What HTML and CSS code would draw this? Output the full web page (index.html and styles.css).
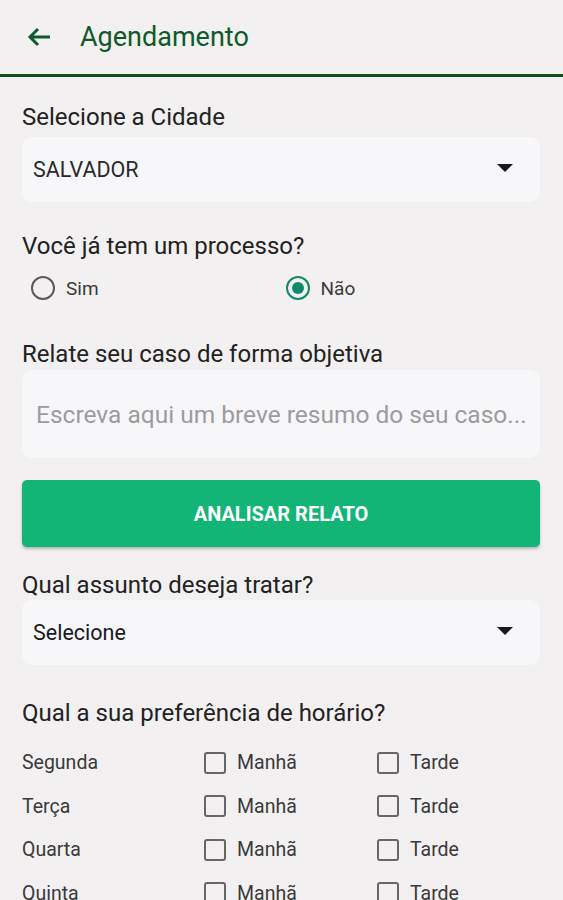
FILE: index.html
```html
<!DOCTYPE html>
<html>
    <head>
        <title>Agendamento</title>
        <meta name="viewport" content="width=device-width, initial-scale=1.0">
        <link rel="stylesheet" href="styles.css">
    </head>
    <body>

        <div class="topbar">
            <svg class="back" width="26" height="20" viewBox="0 0 26 20">
                <path d="M24 10H4M12 2L4 10l8 8" fill="none" stroke="#0f5a2a" stroke-width="3"/>
            </svg>
            <span class="title">Agendamento</span>
        </div>

        <form class="content">
            <label class="question">Selecione a Cidade</label>
            <div class="select">
                <span class="upper">SALVADOR</span>
                <span class="caret"></span>
            </div>

            <label class="question q-radio">Você já tem um processo?</label>
            <div class="radios">
                <div class="option"><span class="radio"></span>Sim</div>
                <div class="option"><span class="radio checked"></span>Não</div>
            </div>

            <label class="question q-case">Relate seu caso de forma objetiva</label>
            <div class="textbox">Escreva aqui um breve resumo do seu caso...</div>

            <div class="btn">ANALISAR RELATO</div>

            <label class="question q-subject">Qual assunto deseja tratar?</label>
            <div class="select">
                <span>Selecione</span>
                <span class="caret"></span>
            </div>

            <label class="question q-time">Qual a sua preferência de horário?</label>
            <div class="days">
                <div class="day">Segunda</div>
                <div class="check"><span class="box"></span>Manhã</div>
                <div class="check"><span class="box"></span>Tarde</div>

                <div class="day">Terça</div>
                <div class="check"><span class="box"></span>Manhã</div>
                <div class="check"><span class="box"></span>Tarde</div>

                <div class="day">Quarta</div>
                <div class="check"><span class="box"></span>Manhã</div>
                <div class="check"><span class="box"></span>Tarde</div>

                <div class="day">Quinta</div>
                <div class="check"><span class="box"></span>Manhã</div>
                <div class="check"><span class="box"></span>Tarde</div>
            </div>
        </form>
    </body>
</html>
```

FILE: styles.css
```css
*{
    margin: 0;
    padding: 0;
    box-sizing: border-box;
}

body{
    width: 563px;
    height: 900px;
    overflow: hidden;
    background-color: #f2f0f1;
    font-family: Roboto, "Liberation Sans", sans-serif;
    color: #222;
}

.topbar{
    display: flex;
    align-items: center;
    height: 77px;
    padding-left: 26px;
    border-bottom: 3px solid #0c4f1f;
}

.back{
    display: block;
}

.title{
    margin-left: 28px;
    font-size: 27px;
    color: #0f5a2a;
}

.content{
    display: flex;
    flex-direction: column;
    padding: 0 23px 0 22px;
}

.question{
    font-size: 24px;
    margin-top: 26px;
    margin-bottom: 6px;
    line-height: 28px;
}

.select{
    display: flex;
    align-items: center;
    justify-content: space-between;
    height: 65px;
    padding: 0 27px 0 11px;
    background-color: #f7f7fa;
    border-radius: 10px;
    font-size: 21.5px;
    color: #1a1a1a;
}

.upper{
    color: #2a2a2a;
}

.caret{
    width: 0;
    height: 0;
    border-left: 8px solid transparent;
    border-right: 8px solid transparent;
    border-top: 8px solid #1a1a1a;
    margin-top: -4px;
}

.q-radio{
    margin-top: 30px;
    margin-bottom: 11px;
}

.radios{
    display: flex;
    height: 34px;
    padding-left: 9px;
}

.option{
    display: flex;
    align-items: center;
    width: 262px;
    font-size: 19px;
    color: #3a3a3a;
}

.radio{
    width: 24px;
    height: 24px;
    border: 2px solid #5a5a5a;
    border-radius: 50%;
    margin-right: 11px;
    position: relative;
}

.radio.checked{
    border-color: #0e8a6c;
}

.radio.checked::after{
    content: "";
    position: absolute;
    left: 4px;
    top: 4px;
    width: 12px;
    height: 12px;
    border-radius: 50%;
    background-color: #0e8a6c;
}

.q-case{
    margin-top: 35px;
    margin-bottom: 2px;
}

.textbox{
    height: 88px;
    padding: 0 14px;
    display: flex;
    align-items: center;
    background-color: #f7f7fa;
    border-radius: 10px;
    font-size: 24.5px;
    color: #9c9c9f;
    white-space: nowrap;
    overflow: hidden;
}

.btn{
    margin-top: 22px;
    height: 67px;
    display: flex;
    align-items: center;
    justify-content: center;
    background-color: #13b576;
    color: #fff;
    font-weight: bold;
    font-size: 20px;
    border-radius: 5px;
    box-shadow: 0 2px 3px rgba(0, 0, 0, 0.25);
}

.q-subject{
    margin-top: 24px;
    margin-bottom: 1px;
}

.q-time{
    margin-top: 34px;
    margin-bottom: 14px;
}

.days{
    display: grid;
    grid-template-columns: 182px 173px 1fr;
    grid-auto-rows: 43.5px;
    align-items: center;
    font-size: 19.5px;
    color: #3a3a3a;
}

.check{
    display: flex;
    align-items: center;
}

.box{
    width: 22px;
    height: 22px;
    border: 2px solid #666;
    border-radius: 3px;
    margin-right: 11px;
}
```
